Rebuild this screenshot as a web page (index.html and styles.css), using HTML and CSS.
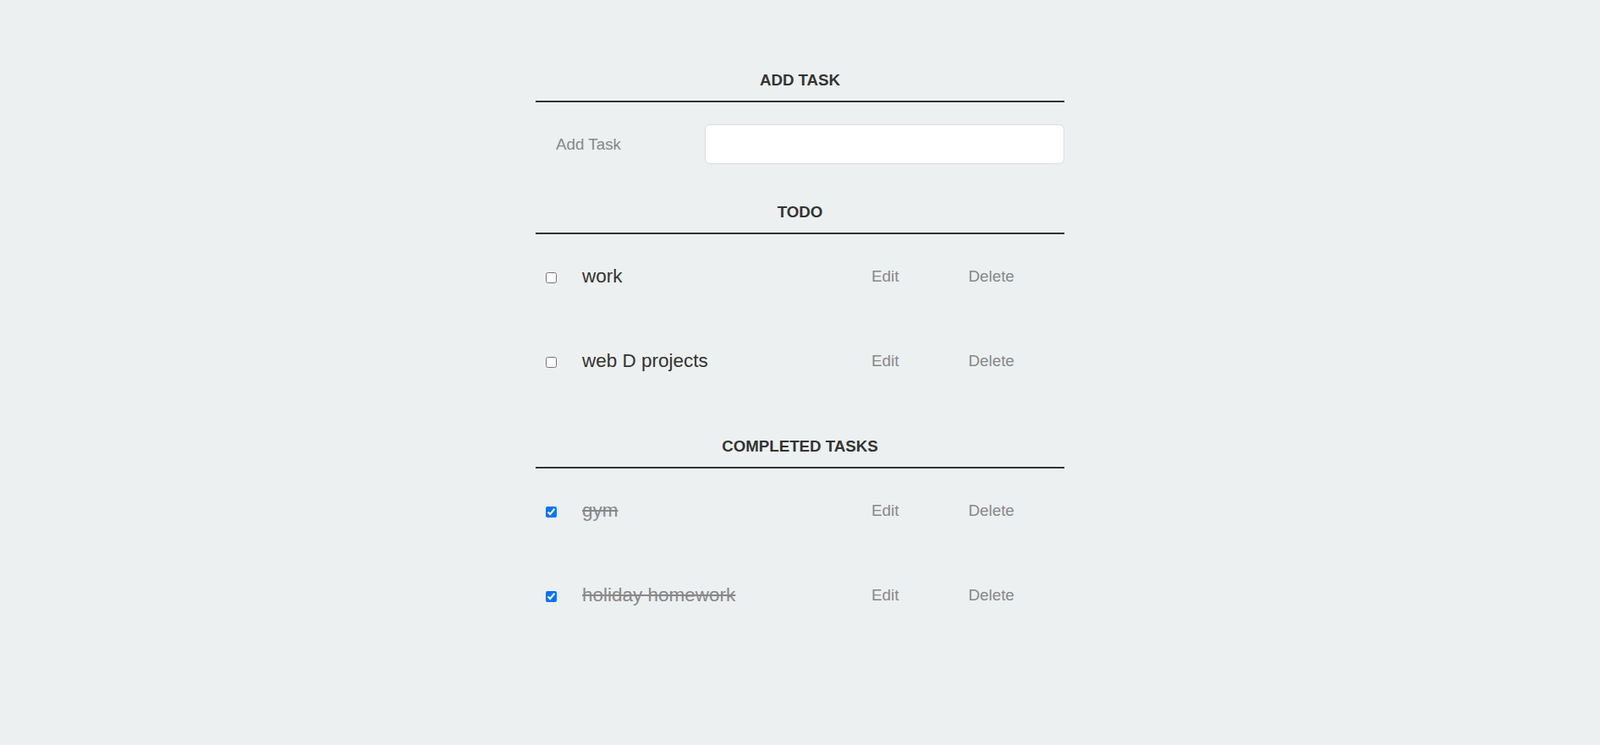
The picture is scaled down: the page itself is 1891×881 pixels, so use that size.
FILE: index.html
```html
<!DOCTYPE html>
<html lang="en">
<head>
<meta charset="utf-8">
<title>Todo App</title>
<link rel="stylesheet" href="styles.css">
</head>
<body>
<div class="container">
  <h3 class="heading">Add Task</h3>
  <div class="add-row">
    <label class="add-label" for="new-task">Add Task</label>
    <input class="add-input" id="new-task" type="text">
  </div>

  <h3 class="heading">Todo</h3>
  <ul class="task-list">
    <li class="task">
      <input class="task-check" type="checkbox">
      <span class="task-label">work</span>
      <button class="task-btn">Edit</button>
      <button class="task-btn">Delete</button>
    </li>
    <li class="task">
      <input class="task-check" type="checkbox">
      <span class="task-label">web D projects</span>
      <button class="task-btn">Edit</button>
      <button class="task-btn">Delete</button>
    </li>
  </ul>

  <h3 class="heading">Completed Tasks</h3>
  <ul class="task-list">
    <li class="task done">
      <input class="task-check" type="checkbox" checked>
      <span class="task-label">gym</span>
      <button class="task-btn">Edit</button>
      <button class="task-btn">Delete</button>
    </li>
    <li class="task done">
      <input class="task-check" type="checkbox" checked>
      <span class="task-label">holiday homework</span>
      <button class="task-btn">Edit</button>
      <button class="task-btn">Delete</button>
    </li>
  </ul>
</div>
</body>
</html>
```

FILE: styles.css
```css
html, body {
  margin: 0;
  padding: 0;
}

body {
  background: #ecf0f1;
  color: #333;
  font-family: "Liberation Sans", Arial, sans-serif;
}

.container {
  width: 625px;
  margin: 44px auto 0;
}

.heading {
  margin: 0;
  padding: 40px 0 14px;
  font-size: 18.7px;
  line-height: 21px;
  font-weight: 700;
  text-transform: uppercase;
  text-align: center;
  color: #333;
  border-bottom: 2px solid #333;
}

.add-row {
  display: flex;
  align-items: center;
  margin: 26px 0 6px;
}

.add-label {
  width: 200px;
  padding-left: 24px;
  box-sizing: border-box;
  font-size: 18.8px;
  color: #888;
}

.add-input {
  flex: 1;
  height: 47px;
  box-sizing: border-box;
  margin: 0;
  padding: 10px;
  border: 1px solid #ddd;
  border-radius: 6px;
  background: #fff;
  font-family: "Liberation Sans", Arial, sans-serif;
  font-size: 18px;
  color: #888;
  outline: none;
}

.task-list {
  margin: 0;
  padding: 0;
  list-style: none;
}

.task {
  display: flex;
  align-items: center;
  height: 40px;
  padding: 30px 0 30px 12px;
}

.task-check {
  width: 13px;
  height: 13px;
  margin: 2px 0 0;
  flex: none;
}

.task-label {
  flex: 1;
  margin-left: 30px;
  font-size: 22.5px;
  line-height: 40px;
  color: #333;
}

.task-btn {
  flex: none;
  width: 114.5px;
  padding: 0 0 0 1px;
  margin: 0;
  border: 0;
  background: none;
  text-align: left;
  font-family: "Liberation Sans", Arial, sans-serif;
  font-size: 18.8px;
  line-height: 40px;
  color: #888;
  cursor: pointer;
}

.done .task-label {
  color: #888;
  text-decoration: line-through;
}
```
